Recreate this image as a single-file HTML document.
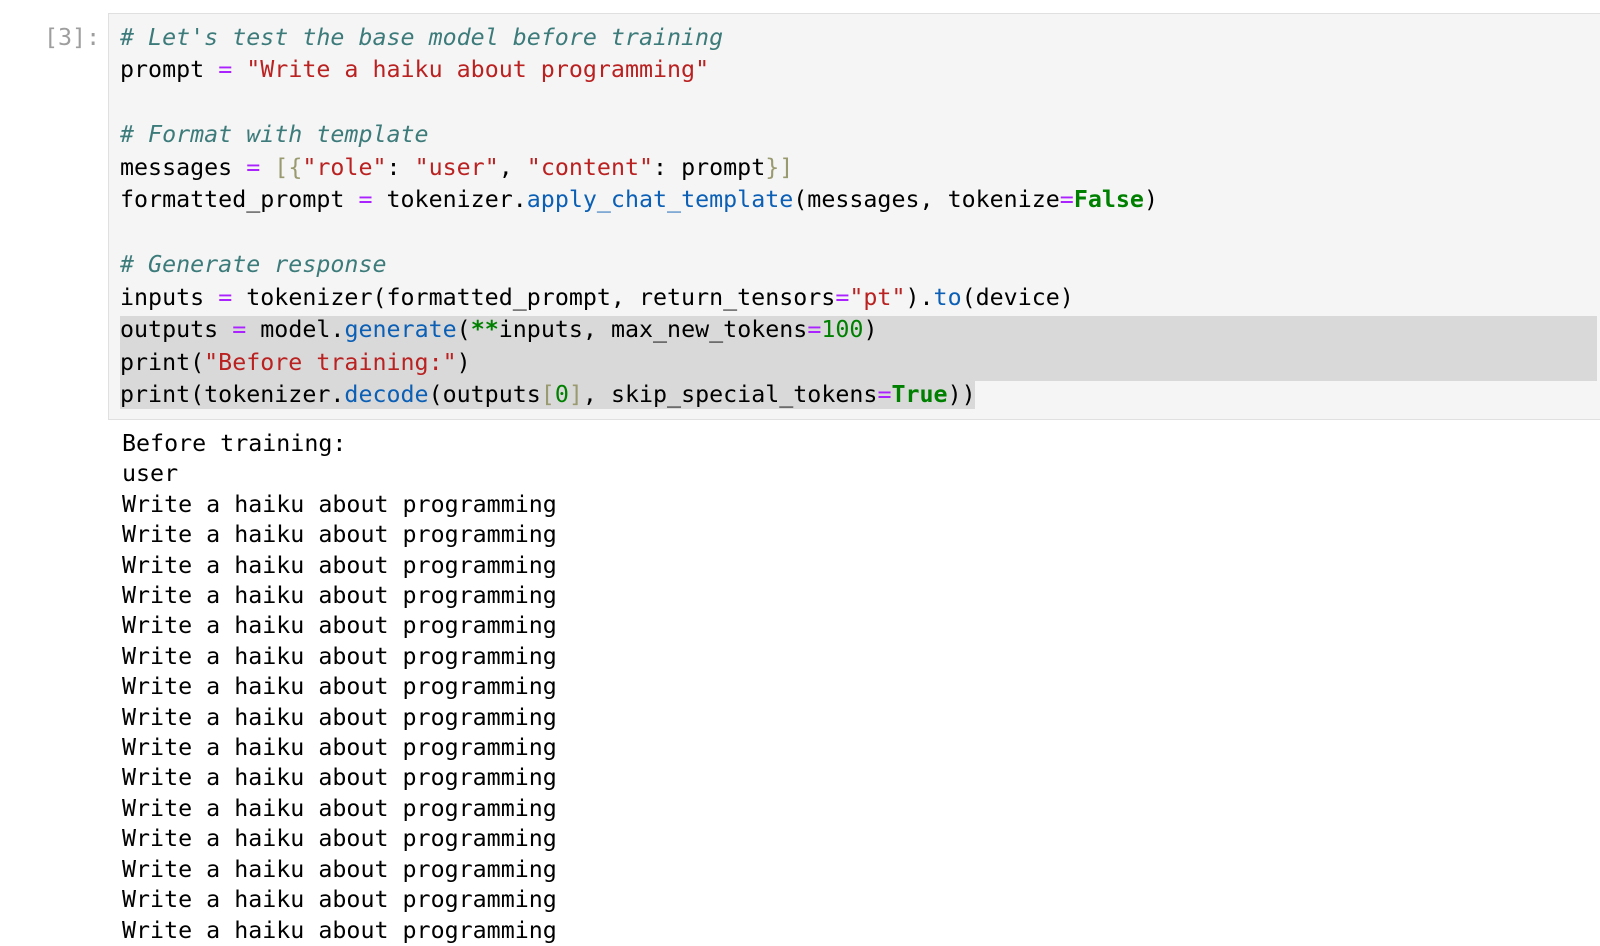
<!DOCTYPE html>
<html><head><meta charset="utf-8"><style>
body{margin:0;background:#fff;width:1600px;height:946px;overflow:hidden;position:relative;font-family:"DejaVu Sans Mono","Liberation Mono",monospace;}
.prompt{position:absolute;left:44px;top:22px;font-size:23.3px;line-height:32.45px;color:#9e9e9e;}
.cell{position:absolute;left:108px;top:13px;width:1500px;height:405px;background:#f5f5f5;border:1px solid #e0e0e0;}
pre{margin:0;font-family:inherit;}
.code{position:absolute;left:120px;top:22px;font-size:23.3px;line-height:32.45px;color:#000;white-space:pre;}
.sel{position:absolute;background:#d9d9d9;}
.c{color:#3d7b7b;font-style:italic}.s{color:#ba2121}.o{color:#aa22ff}.f{color:#0b5fb5}.k{color:#008000;font-weight:bold}.n{color:#008000}.b{color:#9a9a70}
.out{position:absolute;left:122px;top:429px;font-size:23.3px;line-height:30.4px;color:#000;white-space:pre;}
</style></head><body>
<div class="prompt">[3]:</div>
<div class="cell"></div>
<div class="sel" style="left:120px;top:316px;width:1477px;height:65px"></div>
<div class="sel" style="left:120px;top:381px;width:855px;height:28px"></div>
<pre class="code"><span class="c"># Let's test the base model before training</span>
prompt <span class="o">=</span> <span class="s">"Write a haiku about programming"</span>

<span class="c"># Format with template</span>
messages <span class="o">=</span> <span class="b">[{</span><span class="s">"role"</span>: <span class="s">"user"</span>, <span class="s">"content"</span>: prompt<span class="b">}]</span>
formatted_prompt <span class="o">=</span> tokenizer.<span class="f">apply_chat_template</span>(messages, tokenize<span class="o">=</span><span class="k">False</span>)

<span class="c"># Generate response</span>
inputs <span class="o">=</span> tokenizer(formatted_prompt, return_tensors<span class="o">=</span><span class="s">"pt"</span>).<span class="f">to</span>(device)
outputs <span class="o">=</span> model.<span class="f">generate</span>(<span class="k">**</span>inputs, max_new_tokens<span class="o">=</span><span class="n">100</span>)
print(<span class="s">"Before training:"</span>)
print(tokenizer.<span class="f">decode</span>(outputs<span class="b">[</span><span class="n">0</span><span class="b">]</span>, skip_special_tokens<span class="o">=</span><span class="k">True</span>))</pre>
<pre class="out">Before training:
user
Write a haiku about programming
Write a haiku about programming
Write a haiku about programming
Write a haiku about programming
Write a haiku about programming
Write a haiku about programming
Write a haiku about programming
Write a haiku about programming
Write a haiku about programming
Write a haiku about programming
Write a haiku about programming
Write a haiku about programming
Write a haiku about programming
Write a haiku about programming
Write a haiku about programming</pre>
</body></html>
